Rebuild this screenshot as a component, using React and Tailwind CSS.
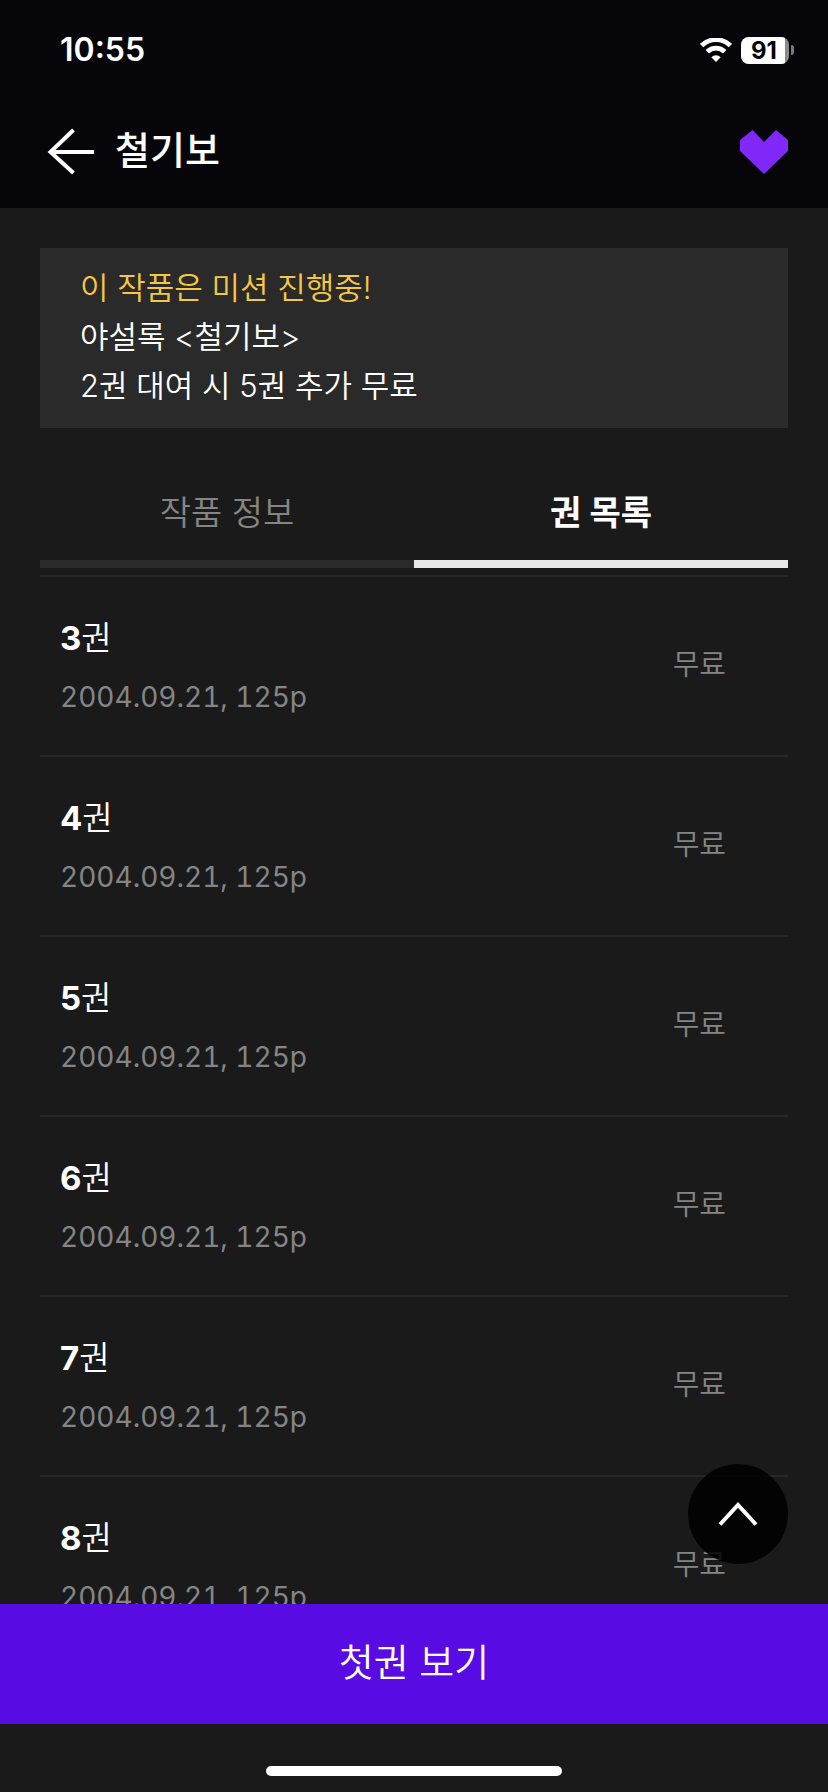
import { useState, useRef } from 'react';

const volumes = [3, 4, 5, 6, 7, 8].map((no) => ({
  no,
  date: '2004.09.21',
  pages: 125,
  price: '무료',
}));

const tabs = [
  { id: 'info', label: '작품 정보' },
  { id: 'volumes', label: '권 목록' },
];

function WifiIcon() {
  return (
    <svg className="w-8 h-6" viewBox="0 0 32 24" fill="none" aria-hidden="true">
      <path d="M1.6 7.6 A20.5 20.5 0 0 1 30.4 7.6" stroke="#fff" strokeWidth="4.8" />
      <path d="M7.3 13.7 A12.4 12.4 0 0 1 24.7 13.7" stroke="#fff" strokeWidth="4.8" />
      <path d="M16 24 L11.3 19.2 A6.8 6.8 0 0 1 20.7 19.2 Z" fill="#fff" />
    </svg>
  );
}

function Battery({ level }) {
  return (
    <div className="flex items-center gap-0.5">
      <div className="relative w-12 h-[27px] rounded-lg overflow-hidden bg-[#8b8b8d]">
        <div className="absolute inset-y-0 left-0 bg-white" style={{ width: `${level}%` }} />
        <span className="absolute inset-0 pt-0.5 pr-0.5 flex items-center justify-center text-2xl leading-7 font-bold text-[#060509]">
          {level}
        </span>
      </div>
      <div className="w-[3px] h-2.5 rounded-r-full bg-[#7c7c7e]" />
    </div>
  );
}

function StatusBar() {
  return (
    <div className="h-[100px] pl-[60px] pr-[34px] flex items-center justify-between font-['Inter','Noto_Sans_CJK_KR',sans-serif]">
      <span className="text-[32px] leading-9 font-semibold">10:55</span>
      <div className="flex items-center gap-[9px]">
        <WifiIcon />
        <Battery level={91} />
      </div>
    </div>
  );
}

function Header() {
  const [liked, setLiked] = useState(true);

  return (
    <header className="bg-[#060509]">
      <StatusBar />
      <div className="h-[108px] pl-[47px] pr-10 pb-1 flex items-center">
        <button type="button" aria-label="뒤로" className="mr-5">
          <svg className="w-12 h-12" viewBox="0 0 48 48" fill="none" stroke="#fff" strokeWidth="4">
            <path d="M26.5 2 L3.5 24 L26.5 45" />
            <path d="M3.5 24 H47" />
          </svg>
        </button>
        <h1 className="pb-1 text-[38px] leading-none font-medium">철기보</h1>
        <button
          type="button"
          aria-label="찜하기"
          aria-pressed={liked}
          onClick={() => setLiked(!liked)}
          className="ml-auto"
        >
          <svg className="w-12 h-11" viewBox="0 0 48 44" fill={liked ? '#7f28f7' : '#55555a'}>
            <path d="M12.5 0 L24 12 L36 0 L48 10 V21 L24 44 L0 21 V10 Z" />
          </svg>
        </button>
      </div>
    </header>
  );
}

function VolumeRow({ volume }) {
  return (
    <li className="h-[180px] pl-5 pr-[62px] flex items-center justify-between border-t-2 border-[#282828]">
      <div className="flex flex-col gap-5">
        <p className="text-[33px] leading-[42px]">
          <span className="font-bold">{volume.no}</span>
          <span className="font-[350]">권</span>
        </p>
        <p className="text-[28px] leading-9 tabular-nums text-[#858585]">
          {volume.date}, {volume.pages}p
        </p>
      </div>
      <span className="pb-0.5 text-[29px] leading-9 font-[350] text-[#858585]">{volume.price}</span>
    </li>
  );
}

export default function App() {
  const [activeTab, setActiveTab] = useState('volumes');
  const listRef = useRef(null);

  const scrollToTop = () => {
    listRef.current?.scrollTo({ top: 0, behavior: 'smooth' });
  };

  return (
    <div className="h-screen flex flex-col overflow-hidden bg-[#1a1a1a] text-white font-['Inter','Noto_Sans_CJK_KR',sans-serif]">
      <Header />

      <main className="flex-1 min-h-0 flex flex-col pt-10">
        {/* Mission notice */}
        <section className="mx-10 px-10 pt-[15px] pb-[18px] bg-[#2a2a2a] text-[31px] leading-[49px] font-[350]">
          <p className="text-[#f5c842]">이 작품은 미션 진행중!</p>
          <p>야설록 &lt;철기보&gt;</p>
          <p>2권 대여 시 5권 추가 무료</p>
        </section>

        {/* Tabs */}
        <div role="tablist" className="mx-10 mt-8 grid grid-cols-2">
          {tabs.map((tab) => (
            <button
              key={tab.id}
              type="button"
              role="tab"
              aria-selected={activeTab === tab.id}
              onClick={() => setActiveTab(tab.id)}
              className={`h-[108px] pt-1.5 border-b-8 text-[34px] leading-none ${
                activeTab === tab.id
                  ? 'font-bold text-white border-[#e8e8e8]'
                  : 'font-[350] text-[#858585] border-[#2a2a2a]'
              }`}
            >
              {tab.label}
            </button>
          ))}
        </div>

        {/* Volume list */}
        <div className="relative flex-1 min-h-0">
          <ul ref={listRef} className="h-full px-10 pt-[7px] overflow-y-auto [scrollbar-width:none]">
            {volumes.map((volume) => (
              <VolumeRow key={volume.no} volume={volume} />
            ))}
          </ul>
          <button
            type="button"
            aria-label="맨 위로"
            onClick={scrollToTop}
            className="absolute right-10 bottom-10 size-[100px] rounded-full bg-black/85 flex items-center justify-center"
          >
            <svg className="w-10 h-6" viewBox="0 0 40 24" fill="none" stroke="#fff" strokeWidth="4">
              <path d="M2 22.5 L20 3 L38 22.5" />
            </svg>
          </button>
        </div>
      </main>

      <button type="button" className="h-[120px] shrink-0 pb-1 bg-[#580ce3] text-[38px] leading-none font-[350]">
        첫권 보기
      </button>

      {/* Home indicator */}
      <div className="h-[68px] shrink-0 pb-4 flex items-end justify-center">
        <div className="w-[296px] h-2.5 rounded-full bg-white" />
      </div>
    </div>
  );
}
